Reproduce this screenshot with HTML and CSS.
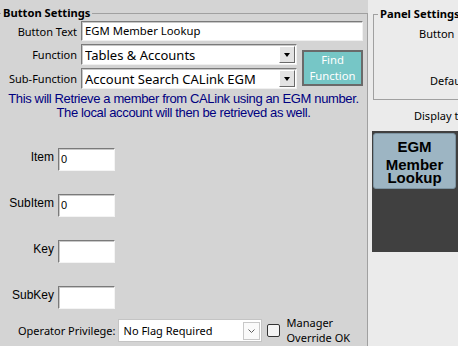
FILE: index.html
```html
<!DOCTYPE html>
<html lang="en">
<head>
    <meta charset="UTF-8">
    <title>Button Settings</title>
    <link rel="stylesheet" href="styles.css">
</head>
<body>
    <div class="window">
        <div class="left">
            <fieldset class="group">
                <legend>Button Settings</legend>

                <div class="top-grid">
                    <label class="lbl">Button Text</label>
                    <div class="text-input wide">EGM Member Lookup</div>

                    <label class="lbl">Function</label>
                    <div class="combo">
                        <span class="combo-text">Tables &amp; Accounts</span>
                        <span class="drop-btn"><span class="tri"></span></span>
                    </div>
                    <button class="find-btn">Find<br>Function</button>

                    <label class="lbl">Sub-Function</label>
                    <div class="combo">
                        <span class="combo-text">Account Search CALink EGM</span>
                        <span class="drop-btn"><span class="tri"></span></span>
                    </div>
                </div>

                <p class="hint">This will Retrieve a member from CALink using an EGM number.<br>The local account will then be retrieved as well.</p>

                <div class="fields">
                    <label class="field-lbl">Item</label>
                    <div class="small-input">0</div>
                    <label class="field-lbl">SubItem</label>
                    <div class="small-input">0</div>
                    <label class="field-lbl">Key</label>
                    <div class="small-input"></div>
                    <label class="field-lbl">SubKey</label>
                    <div class="small-input"></div>
                </div>

                <div class="priv-row">
                    <label class="priv-lbl">Operator Privilege:</label>
                    <div class="flat-combo">
                        <span class="combo-text">No Flag Required</span>
                        <span class="chevron">
                            <svg width="7" height="4" viewBox="0 0 7 4"><path d="M0.5 0.5 L3.5 3.5 L6.5 0.5" fill="none" stroke="#606060" stroke-width="1"/></svg>
                        </span>
                    </div>
                    <span class="check"></span>
                    <span class="check-lbl">Manager<br>Override OK</span>
                </div>
            </fieldset>
        </div>

        <div class="right">
            <fieldset class="panel-group">
                <legend>Panel Settings</legend>
                <div class="panel-body">
                    <div class="panel-line first">Button</div>
                    <div class="panel-line second">Default</div>
                </div>
            </fieldset>
            <div class="display-lbl">Display text</div>
            <div class="preview">
                <div class="tile">
                    <div class="tile-top">EGM</div>
                    <div>Member Lookup</div>
                </div>
            </div>
        </div>
    </div>
</body>
</html>
```

FILE: styles.css
```css
body {
    margin: 0;
    width: 458px;
    height: 346px;
    overflow: hidden;
    background: #ebebeb;
    font-family: "Noto Sans", "Open Sans", sans-serif;
    font-size: 11px;
    color: #000;
}
.window {
    display: flex;
    height: 346px;
}

/* left side */
.left {
    width: 368px;
    flex: none;
    background: #d4d4d4;
    overflow: hidden;
}
.group {
    margin: 6px 0 0 -1px;
    padding: 0 0 30px 0;
    border: 1px solid #a0a0a0;
    min-width: 0;
}
.group legend,
.panel-group legend {
    margin-left: 1px;
    padding: 0 2px;
    font-weight: bold;
    font-size: 11.2px;
    line-height: 14px;
}
.top-grid {
    display: grid;
    grid-template-columns: 77px 216px 62px;
    grid-template-rows: 20px 21px 21px;
    column-gap: 4px;
    row-gap: 3px;
    padding-top: 1px;
}
.lbl {
    align-self: center;
    text-align: right;
    white-space: nowrap;
}
.text-input {
    background: #fff;
    border: 1px solid;
    border-color: #7a7a7a #f0f0f0 #f0f0f0 #7a7a7a;
    box-shadow: inset 1px 1px 0 #c8c8c8;
    padding: 0 3px;
    line-height: 18px;
    font-size: 11.3px;
}
.wide {
    grid-column: 2 / span 2;
}
.combo {
    display: flex;
    align-items: stretch;
    background: #fff;
    border: 1px solid;
    border-color: #7a7a7a #f0f0f0 #f0f0f0 #7a7a7a;
    box-shadow: inset 1px 1px 0 #c8c8c8;
    padding: 1px 1px 1px 3px;
}
.combo-text {
    flex: 1;
    font-size: 13px;
    line-height: 18px;
    white-space: nowrap;
    overflow: hidden;
}
.drop-btn {
    width: 14px;
    display: flex;
    align-items: center;
    justify-content: center;
    background: #e3e3e3;
    border: 1px solid;
    border-color: #fff #6a6a6a #6a6a6a #fff;
}
.tri {
    width: 0;
    height: 0;
    border-left: 3.5px solid transparent;
    border-right: 3.5px solid transparent;
    border-top: 4px solid #000;
}
.find-btn {
    grid-column: 3;
    grid-row: 2 / span 2;
    align-self: start;
    margin: 6px 0 0 1px;
    height: 36px;
    padding: 0;
    background: #76c6c6;
    border: 2px solid #6a6a6a;
    color: #fff;
    font-family: "Noto Sans", "Open Sans", sans-serif;
    font-size: 11.3px;
    line-height: 16px;
}
.hint {
    margin: 3px 0 0;
    text-align: center;
    white-space: nowrap;
    font-family: "Liberation Sans", Arial, sans-serif;
    font-size: 13px;
    letter-spacing: -0.36px;
    line-height: 14px;
    color: #000080;
}
.fields {
    display: grid;
    grid-template-columns: 54px 57px;
    grid-auto-rows: 23px;
    column-gap: 4px;
    row-gap: 23px;
    margin-top: 28px;
}
.field-lbl {
    align-self: start;
    margin-top: 3px;
    text-align: right;
    font-family: "Liberation Sans", Arial, sans-serif;
    font-size: 12px;
    line-height: 13px;
}
.small-input {
    background: #fff;
    border: 1px solid;
    border-color: #7a7a7a #f4f4f4 #f4f4f4 #7a7a7a;
    box-shadow: inset 1px 1px 0 #c8c8c8;
    padding: 0 2px;
    font-family: "Liberation Sans", Arial, sans-serif;
    font-size: 11px;
    line-height: 21px;
}
.priv-row {
    display: flex;
    align-items: center;
    margin-top: 6px;
    padding-left: 18px;
}
.priv-lbl {
    white-space: nowrap;
    margin-right: 2px;
}
.flat-combo {
    display: flex;
    align-items: stretch;
    width: 144px;
    height: 23px;
    box-sizing: border-box;
    background: #fff;
    border: 1px solid #c4c4c4;
    padding: 2px 1px 1px 5px;
}
.flat-combo .combo-text {
    font-size: 11px;
    line-height: 18px;
}
.chevron {
    width: 15px;
    display: flex;
    align-items: center;
    justify-content: center;
    border: 1px solid #c8c8c8;
    background: #fafafa;
}
.check {
    width: 13px;
    height: 13px;
    box-sizing: border-box;
    margin-left: 5px;
    border: 1px solid #333;
    border-radius: 2px;
    background: #f4f4f4;
}
.check-lbl {
    margin-left: 7px;
    line-height: 15px;
    white-space: nowrap;
}

/* right side */
.right {
    flex: 1;
    overflow: hidden;
    background: #ebebeb;
}
.panel-group {
    margin: 7px 0 0 5px;
    padding: 0;
    width: 140px;
    border: 1px solid #a0a0a0;
    border-right: none;
}
.panel-group legend {
    margin-left: 4px;
}
.panel-body {
    height: 78px;
    white-space: nowrap;
}
.panel-line {
    line-height: 15px;
}
.panel-line.first {
    padding: 5px 0 0 45px;
}
.panel-line.second {
    padding: 32px 0 0 56px;
}
.display-lbl {
    margin-top: 8px;
    padding-left: 46px;
    line-height: 15px;
    white-space: nowrap;
}
.preview {
    margin: 8px 0 0 4px;
    height: 121px;
    padding: 2px 0 0 1px;
    box-sizing: border-box;
    background: #404040;
}
.tile {
    width: 83px;
    height: 56px;
    box-sizing: border-box;
    padding-top: 6px;
    background: #9db5c3;
    border: 1px solid #7d94a2;
    border-radius: 3px;
    text-align: center;
    font-family: "Liberation Sans", Arial, sans-serif;
    font-weight: bold;
    font-size: 15px;
    line-height: 13px;
}
.tile-top {
    margin-bottom: 5px;
}
```
